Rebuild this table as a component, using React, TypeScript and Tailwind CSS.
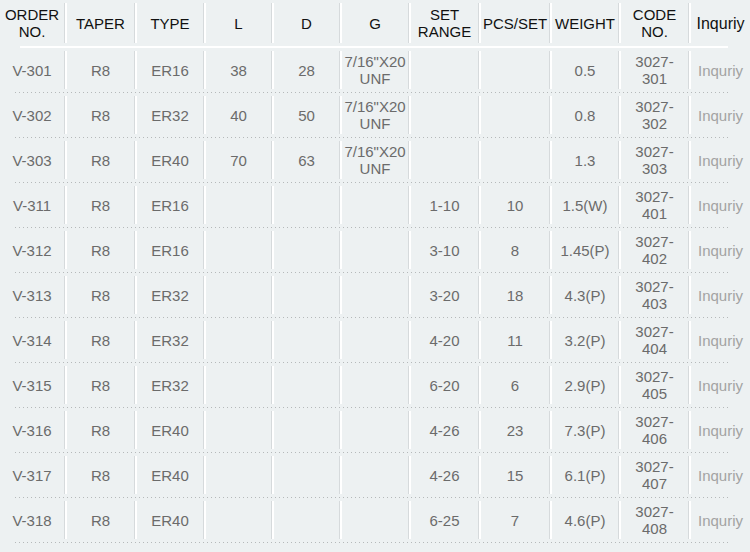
import React from 'react';

type Row = {
  order: string;
  type: string;
  l?: string;
  d?: string;
  g?: boolean;
  range?: string;
  pcs?: string;
  weight: string;
  code: string;
};

const rows: Row[] = [
  { order: 'V-301', type: 'ER16', l: '38', d: '28', g: true, weight: '0.5', code: '301' },
  { order: 'V-302', type: 'ER32', l: '40', d: '50', g: true, weight: '0.8', code: '302' },
  { order: 'V-303', type: 'ER40', l: '70', d: '63', g: true, weight: '1.3', code: '303' },
  { order: 'V-311', type: 'ER16', range: '1-10', pcs: '10', weight: '1.5(W)', code: '401' },
  { order: 'V-312', type: 'ER16', range: '3-10', pcs: '8', weight: '1.45(P)', code: '402' },
  { order: 'V-313', type: 'ER32', range: '3-20', pcs: '18', weight: '4.3(P)', code: '403' },
  { order: 'V-314', type: 'ER32', range: '4-20', pcs: '11', weight: '3.2(P)', code: '404' },
  { order: 'V-315', type: 'ER32', range: '6-20', pcs: '6', weight: '2.9(P)', code: '405' },
  { order: 'V-316', type: 'ER40', range: '4-26', pcs: '23', weight: '7.3(P)', code: '406' },
  { order: 'V-317', type: 'ER40', range: '4-26', pcs: '15', weight: '6.1(P)', code: '407' },
  { order: 'V-318', type: 'ER40', range: '6-25', pcs: '7', weight: '4.6(P)', code: '408' },
];

const grid =
  'grid grid-cols-[64px_70px_69px_68px_68px_69px_70px_71px_69px_70px_62px]';

// one table cell; every cell but the first has the white divider on its left
function Cell({ first, children, className }: { first?: boolean; children?: React.ReactNode; className?: string }) {
  return (
    <div className="flex">
      {!first && <div className="my-[3px] w-[3px] border-l border-[#d6dadc] bg-white" />}
      <div className={`flex flex-1 items-center justify-center text-center leading-[17px] ${className ?? ''}`}>
        {children}
      </div>
    </div>
  );
}

export default function App() {
  const head = ['TAPER', 'TYPE', 'L', 'D', 'G'];
  return (
    <div className="h-[552px] w-[750px] overflow-hidden bg-[#edf1f2] font-['Liberation_Sans',Arial,sans-serif] text-[15px]">
      {/* Header */}
      <div className={`${grid} h-[46px] text-[#111]`}>
        <Cell first>
          ORDER
          <br />
          NO.
        </Cell>
        {head.map((h) => (
          <Cell key={h}>{h}</Cell>
        ))}
        <Cell>
          SET
          <br />
          RANGE
        </Cell>
        <Cell>PCS/SET</Cell>
        <Cell>WEIGHT</Cell>
        <Cell>
          CODE
          <br />
          NO.
        </Cell>
        <Cell className="text-[16px]">Inquriy</Cell>
      </div>
      <div className="ml-[20px] mr-[22px] h-[2px] bg-white" />

      {/* Body */}
      {rows.map((r) => (
        <div key={r.order}>
          <div className={`${grid} h-[44px] text-[#6b6b6b]`}>
            <Cell first>{r.order}</Cell>
            <Cell>R8</Cell>
            <Cell>{r.type}</Cell>
            <Cell>{r.l}</Cell>
            <Cell>{r.d}</Cell>
            <Cell>
              {r.g && (
                <span>
                  7/16"X20
                  <br />
                  UNF
                </span>
              )}
            </Cell>
            <Cell>{r.range}</Cell>
            <Cell>{r.pcs}</Cell>
            <Cell>{r.weight}</Cell>
            <Cell>
              3027-
              <br />
              {r.code}
            </Cell>
            <Cell className="text-[#a3a3a3]">Inquriy</Cell>
          </div>
          <div className="ml-[15px] mr-[22px] h-px bg-[repeating-linear-gradient(to_right,#b5b9ba_0_1px,transparent_1px_4px)]" />
        </div>
      ))}
    </div>
  );
}
